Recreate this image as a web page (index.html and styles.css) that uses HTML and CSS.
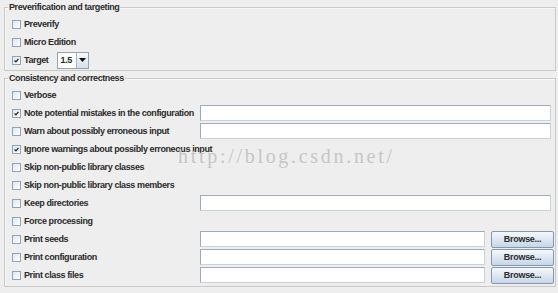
FILE: index.html
```html
<!DOCTYPE html>
<html lang="en">
<head>
    <meta charset="UTF-8">
    <title>ProGuard - Options</title>
    <link rel="stylesheet" href="styles.css">
</head>
<body>
    <div class="panel">
        <fieldset class="group group-top">
            <legend>Preverification and targeting</legend>
            <div class="row">
                <span class="check"></span><span class="label">Preverify</span>
            </div>
            <div class="row">
                <span class="check"></span><span class="label">Micro Edition</span>
            </div>
            <div class="row">
                <span class="check on"><svg viewBox="0 0 9 9"><path d="M2 4.5 L3.8 6.3 L7 2.3"/></svg></span><span class="label">Target</span>
                <div class="combo">
                    <span class="combo-value">1.5</span>
                    <span class="combo-arrow"><svg viewBox="0 0 7 4"><path d="M0 0 H7 L3.5 4 Z"/></svg></span>
                </div>
            </div>
        </fieldset>

        <fieldset class="group group-main">
            <legend>Consistency and correctness</legend>
            <div class="row">
                <span class="option"><span class="check"></span><span class="label">Verbose</span></span>
            </div>
            <div class="row">
                <span class="option"><span class="check on"><svg viewBox="0 0 9 9"><path d="M2 4.5 L3.8 6.3 L7 2.3"/></svg></span><span class="label">Note potential mistakes in the configuration</span></span>
                <span class="field"></span>
            </div>
            <div class="row">
                <span class="option"><span class="check"></span><span class="label">Warn about possibly erroneous input</span></span>
                <span class="field"></span>
            </div>
            <div class="row">
                <span class="option"><span class="check on"><svg viewBox="0 0 9 9"><path d="M2 4.5 L3.8 6.3 L7 2.3"/></svg></span><span class="label">Ignore warnings about possibly erroneous input</span></span>
            </div>
            <div class="row">
                <span class="option"><span class="check"></span><span class="label">Skip non-public library classes</span></span>
            </div>
            <div class="row">
                <span class="option"><span class="check"></span><span class="label">Skip non-public library class members</span></span>
            </div>
            <div class="row">
                <span class="option"><span class="check"></span><span class="label">Keep directories</span></span>
                <span class="field"></span>
            </div>
            <div class="row">
                <span class="option"><span class="check"></span><span class="label">Force processing</span></span>
            </div>
            <div class="row with-button">
                <span class="option"><span class="check"></span><span class="label">Print seeds</span></span>
                <span class="field"></span>
                <button class="browse">Browse...</button>
            </div>
            <div class="row with-button">
                <span class="option"><span class="check"></span><span class="label">Print configuration</span></span>
                <span class="field"></span>
                <button class="browse">Browse...</button>
            </div>
            <div class="row with-button">
                <span class="option"><span class="check"></span><span class="label">Print class files</span></span>
                <span class="field"></span>
                <button class="browse">Browse...</button>
            </div>
        </fieldset>

        <div class="watermark">http://blog.csdn.net/</div>
    </div>
</body>
</html>
```

FILE: styles.css
```css
body { margin: 0; background: #eeeeee; font-family: "Liberation Sans", Arial, sans-serif; font-size: 9px; font-weight: bold; color: #2a2a2a; }
.panel { position: relative; width: 558px; height: 293px; box-sizing: border-box; padding: 1px 2px 0 4px; }
.group { margin: 0; padding: 2px 0 1px 0; border: 1px solid #c9c9c9; box-shadow: inset 1px 1px 0 #f8f8f8; }
.group-main { margin-top: 1px; padding: 2px 0 2px 0; }
legend { margin-left: 3px; padding: 0 1px; line-height: 12px; letter-spacing: -0.4px; }
.row { display: flex; align-items: center; height: 18px; padding-left: 7px; padding-right: 4px; }
.row.with-button { padding-right: 1px; }
.option { display: flex; align-items: center; width: 188px; flex: none; }
.check { width: 9px; height: 9px; box-sizing: border-box; border: 1px solid #8fa3b9; background: linear-gradient(135deg, #dce6f1, #ffffff); flex: none; display: flex; }
.check svg { width: 7px; height: 7px; }
.check path { fill: none; stroke: #1e1e1e; stroke-width: 1.6; }
.label { margin-left: 3px; letter-spacing: -0.4px; white-space: nowrap; }
.combo { display: flex; height: 17px; margin-left: 9px; border: 1px solid #94a4b6; box-sizing: border-box; background: #fff; }
.combo-value { width: 16px; padding-left: 2px; line-height: 15px; letter-spacing: -0.3px; }
.combo-arrow { width: 11px; border-left: 1px solid #a7b5c4; background: linear-gradient(#f6f9fc, #d4e0ec); display: flex; align-items: center; justify-content: center; }
.combo-arrow svg { width: 7px; height: 4px; }
.combo-arrow path { fill: #111; }
.field { flex: 1; height: 16px; box-sizing: border-box; background: #fff; border: 1px solid; border-color: #9dabba #c8d2dc #c8d2dc #9dabba; }
.browse { width: 63px; height: 17px; margin-left: 6px; padding: 0; flex: none; border: 1px solid #8598ad; border-radius: 2px; background: linear-gradient(#f5f8fc, #c6d6e8); font-family: "Liberation Sans", Arial, sans-serif; font-size: 9px; font-weight: bold; letter-spacing: -0.3px; color: #2a2a2a; }
.watermark { position: absolute; left: 178px; top: 145px; font-family: "Liberation Serif", serif; font-size: 20px; font-weight: normal; letter-spacing: 2.7px; color: #c6c6c6; pointer-events: none; }
```
